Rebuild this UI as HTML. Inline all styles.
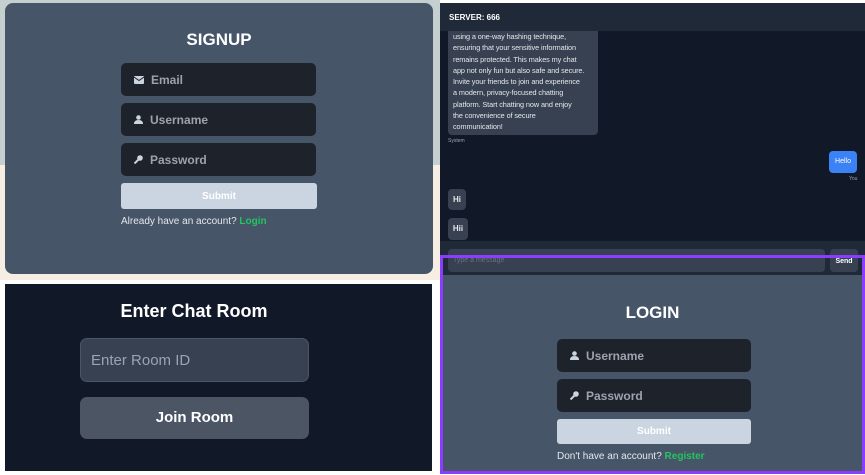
<!DOCTYPE html>
<html><head><style>
*{margin:0;padding:0;box-sizing:border-box}
body{width:865px;height:475px;background:#fff;position:relative;overflow:hidden;font-family:"Liberation Sans",sans-serif}
.abs{position:absolute}
.inp{position:absolute;background:#1e232b;border-radius:5px;color:#9ca3af;font-weight:bold;font-size:12px;display:flex;align-items:center;padding-left:13px}
.inp svg{margin-right:7px}
.sub{position:absolute;background:#cbd5e1;color:#fff;font-weight:bold;font-size:10px;display:flex;align-items:center;justify-content:center;border-radius:3px}
.bub{position:absolute;background:#374151;border-radius:4px;color:#e5e7eb;font-size:8px}
</style></head><body>
<!-- signup -->
<div class="abs" style="left:0;top:0;width:440px;height:165px;background:#c6cfcf"></div>
<div class="abs" style="left:0;top:165px;width:440px;height:115px;background:#f6ede3"></div>
<div class="abs" style="left:5px;top:3px;width:428px;height:271px;background:#475569;border-radius:8px"></div>
<div class="abs" style="left:5px;top:30px;width:428px;text-align:center;color:#fff;font-weight:bold;font-size:17px">SIGNUP</div>
<div class="inp" style="left:121px;top:63px;width:195px;height:33px"><svg width="10" height="8" viewBox="0 0 10 8"><rect width="10" height="8" rx="1" fill="#cbd5e1"/><path d="M0 1L5 4.5L10 1" stroke="#1e232b" fill="none"/></svg>Email</div>
<div class="inp" style="left:121px;top:103px;width:195px;height:33px"><svg width="9" height="9" viewBox="0 0 9 9"><circle cx="4.5" cy="2.5" r="2.3" fill="#cbd5e1"/><path d="M0 9Q0 5 4.5 5Q9 5 9 9Z" fill="#cbd5e1"/></svg>Username</div>
<div class="inp" style="left:121px;top:143px;width:195px;height:33px"><svg width="9" height="9" viewBox="0 0 9 9"><circle cx="6" cy="3" r="2.8" fill="#cbd5e1"/><path d="M5 4L0.5 8.5" stroke="#cbd5e1" stroke-width="2"/></svg>Password</div>
<div class="sub" style="left:121px;top:183px;width:196px;height:26px">Submit</div>
<div class="abs" style="left:121px;top:216px;font-size:10px;color:#e5e7eb">Already have an account? <b style="color:#22c55e">Login</b></div>
<!-- chat -->
<div class="abs" style="left:440px;top:3px;width:425px;height:272px;background:#111827"></div>
<div class="abs" style="left:440px;top:3px;width:425px;height:28px;background:#1f2937;color:#fff;font-weight:bold;font-size:8px;padding:10px 0 0 9px">SERVER: 666</div>
<div class="bub" style="left:448px;top:31px;width:150px;height:104px;padding:0 5px;line-height:11.3px;font-size:7.3px;letter-spacing:-0.1px;white-space:nowrap;border-radius:0 0 4px 4px">using a one-way hashing technique,<br>ensuring that your sensitive information<br>remains protected. This makes my chat<br>app not only fun but also safe and secure.<br>Invite your friends to join and experience<br>a modern, privacy-focused chatting<br>platform. Start chatting now and enjoy<br>the convenience of secure<br>communication!</div>
<div class="abs" style="left:448px;top:138px;font-size:5px;color:#9ca3af">System</div>
<div class="bub" style="left:829px;top:151px;width:28px;height:22px;background:#3b82f6;color:#fff;line-height:22px;text-align:center;font-size:7px">Hello</div>
<div class="abs" style="left:849px;top:176px;font-size:5px;color:#9ca3af">You</div>
<div class="bub" style="left:448px;top:189px;width:18px;height:21px;line-height:21px;text-align:center;font-weight:bold">Hi</div>
<div class="bub" style="left:448px;top:218px;width:20px;height:22px;line-height:22px;text-align:center;font-weight:bold">Hii</div>
<div class="abs" style="left:440px;top:241px;width:425px;height:34px;background:#1f2937"></div>
<div class="abs" style="left:448px;top:249px;width:377px;height:23px;background:#374151;border-radius:4px;font-size:7px;color:#6b7280;padding:8px 0 0 5px">Type a message</div>
<div class="abs" style="left:830px;top:249px;width:28px;height:23px;background:#374151;border-radius:4px;font-size:7px;font-weight:bold;color:#fff;text-align:center;line-height:25px">Send</div>
<!-- login -->
<div class="abs" style="left:440px;top:275px;width:425px;height:199px;background:#475569"></div>
<div class="abs" style="left:440px;top:255px;width:425px;height:219px;border:3px solid #8b3dff"></div>
<div class="abs" style="left:440px;top:303px;width:425px;text-align:center;color:#fff;font-weight:bold;font-size:17px">LOGIN</div>
<div class="inp" style="left:557px;top:339px;width:194px;height:33px"><svg width="9" height="9" viewBox="0 0 9 9"><circle cx="4.5" cy="2.5" r="2.3" fill="#cbd5e1"/><path d="M0 9Q0 5 4.5 5Q9 5 9 9Z" fill="#cbd5e1"/></svg>Username</div>
<div class="inp" style="left:557px;top:379px;width:194px;height:33px"><svg width="9" height="9" viewBox="0 0 9 9"><circle cx="6" cy="3" r="2.8" fill="#cbd5e1"/><path d="M5 4L0.5 8.5" stroke="#cbd5e1" stroke-width="2"/></svg>Password</div>
<div class="sub" style="left:557px;top:419px;width:194px;height:25px">Submit</div>
<div class="abs" style="left:557px;top:451px;font-size:10px;color:#e5e7eb">Don't have an account? <b style="color:#22c55e">Register</b></div>
<!-- enter room -->
<div class="abs" style="left:5px;top:284px;width:427px;height:187px;background:#111827"></div>
<div class="abs" style="left:5px;top:301px;width:378px;text-align:center;color:#fff;font-weight:bold;font-size:18px">Enter Chat Room</div>
<div class="abs" style="left:80px;top:338px;width:229px;height:44px;background:#374151;border:1px solid #4b5563;border-radius:7px;color:#9ca3af;font-size:15px;padding:13px 0 0 10px">Enter Room ID</div>
<div class="abs" style="left:80px;top:397px;width:229px;height:42px;background:#4b5563;border-radius:7px;color:#fff;font-weight:bold;font-size:15px;text-align:center;line-height:42px">Join Room</div>
</body></html>
